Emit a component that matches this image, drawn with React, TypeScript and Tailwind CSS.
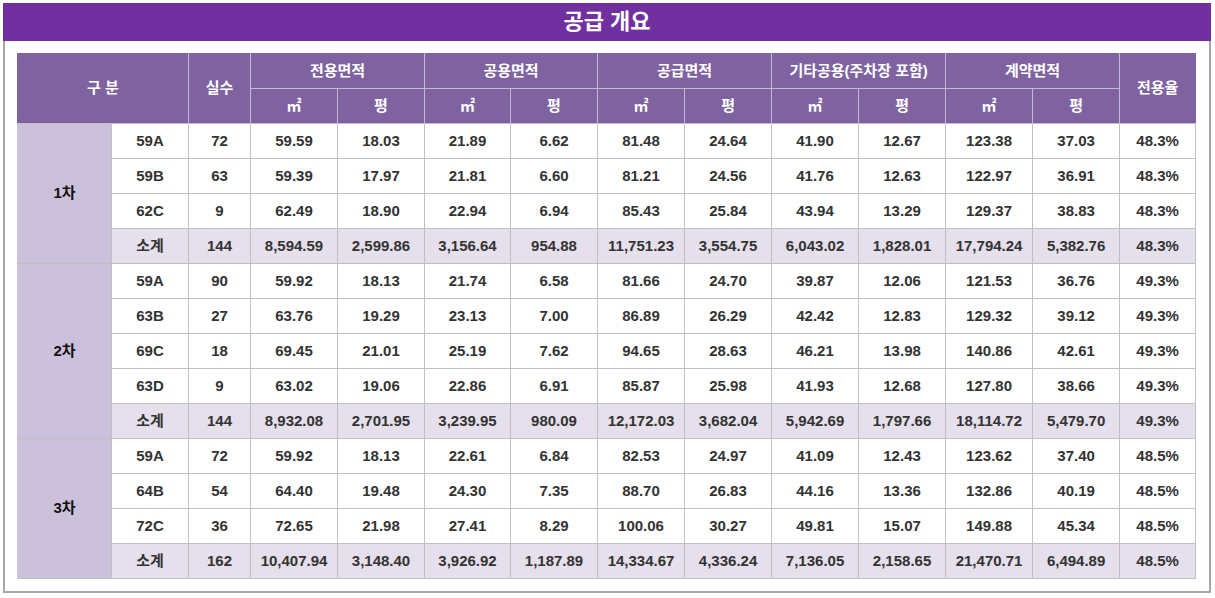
import React from "react";

type Row = string[];
const groups: { name: string; rows: Row[] }[] = [
  {
    name: "1차",
    rows: [
      ["59A", "72", "59.59", "18.03", "21.89", "6.62", "81.48", "24.64", "41.90", "12.67", "123.38", "37.03", "48.3%"],
      ["59B", "63", "59.39", "17.97", "21.81", "6.60", "81.21", "24.56", "41.76", "12.63", "122.97", "36.91", "48.3%"],
      ["62C", "9", "62.49", "18.90", "22.94", "6.94", "85.43", "25.84", "43.94", "13.29", "129.37", "38.83", "48.3%"],
      ["소계", "144", "8,594.59", "2,599.86", "3,156.64", "954.88", "11,751.23", "3,554.75", "6,043.02", "1,828.01", "17,794.24", "5,382.76", "48.3%"],
    ],
  },
  {
    name: "2차",
    rows: [
      ["59A", "90", "59.92", "18.13", "21.74", "6.58", "81.66", "24.70", "39.87", "12.06", "121.53", "36.76", "49.3%"],
      ["63B", "27", "63.76", "19.29", "23.13", "7.00", "86.89", "26.29", "42.42", "12.83", "129.32", "39.12", "49.3%"],
      ["69C", "18", "69.45", "21.01", "25.19", "7.62", "94.65", "28.63", "46.21", "13.98", "140.86", "42.61", "49.3%"],
      ["63D", "9", "63.02", "19.06", "22.86", "6.91", "85.87", "25.98", "41.93", "12.68", "127.80", "38.66", "49.3%"],
      ["소계", "144", "8,932.08", "2,701.95", "3,239.95", "980.09", "12,172.03", "3,682.04", "5,942.69", "1,797.66", "18,114.72", "5,479.70", "49.3%"],
    ],
  },
  {
    name: "3차",
    rows: [
      ["59A", "72", "59.92", "18.13", "22.61", "6.84", "82.53", "24.97", "41.09", "12.43", "123.62", "37.40", "48.5%"],
      ["64B", "54", "64.40", "19.48", "24.30", "7.35", "88.70", "26.83", "44.16", "13.36", "132.86", "40.19", "48.5%"],
      ["72C", "36", "72.65", "21.98", "27.41", "8.29", "100.06", "30.27", "49.81", "15.07", "149.88", "45.34", "48.5%"],
      ["소계", "162", "10,407.94", "3,148.40", "3,926.92", "1,187.89", "14,334.67", "4,336.24", "7,136.05", "2,158.65", "21,470.71", "6,494.89", "48.5%"],
    ],
  },
];

const heads = ["전용면적", "공용면적", "공급면적", "기타공용(주차장 포함)", "계약면적"];
const colW = [94, 77, 62, 87, 87, 86, 87, 87, 87, 87, 87, 87, 87, 76];

const font = { fontFamily: '"Liberation Sans", Arial, "Noto Sans CJK KR", sans-serif' };

const th = "border border-[#c4bccf] bg-[#7f63a1] text-white font-bold text-[15px] h-[35px] p-0 text-center align-middle";
const td = "border border-[#c0c0c0] font-bold text-[15px] text-[#333] h-[35px] p-0 text-center align-middle";

export default function App() {
  return (
    <div className="w-[1215px] h-[598px] bg-white pt-[3px] pl-[3px]" style={font}>
      <div className="w-[1208px]">
        <div className="h-[38px] bg-[#7030a0] flex items-center justify-center text-white font-bold text-[22px] leading-none">
          공급 개요
        </div>
        <div className="border-l-2 border-r-2 border-b-2 border-[#a6a6a6] pl-[12px] pr-[12px] pt-[12px] pb-[12px]">
          <table className="table-fixed border-collapse w-[1178px]">
            <colgroup>
              {colW.map((w, i) => (
                <col key={i} style={{ width: w }} />
              ))}
            </colgroup>
            <thead>
              <tr>
                <th className={th + " border-l-[#7f63a1] border-t-[#7f63a1]"} colSpan={2} rowSpan={2}>
                  구 분
                </th>
                <th className={th + " border-t-[#7f63a1]"} rowSpan={2}>실수</th>
                {heads.map((h) => (
                  <th key={h} className={th + " border-t-[#7f63a1]"} colSpan={2}>
                    {h}
                  </th>
                ))}
                <th className={th + " border-r-[#7f63a1] border-t-[#7f63a1]"} rowSpan={2}>전용율</th>
              </tr>
              <tr>
                {heads.map((h) => (
                  <React.Fragment key={h}>
                    <th className={th}>㎡</th>
                    <th className={th}>평</th>
                  </React.Fragment>
                ))}
              </tr>
            </thead>
            <tbody>
              {groups.map((g) =>
                g.rows.map((r, ri) => {
                  const sub = r[0] === "소계";
                  return (
                    <tr key={g.name + ri} className={sub ? "bg-[#e5e0ec]" : "bg-white"}>
                      {ri === 0 && (
                        <td
                          rowSpan={g.rows.length}
                          className="border border-[#c0c0c0] border-l-[#ccc1da] bg-[#ccc1da] font-bold text-[15px] text-[#111] p-0 text-center align-middle"
                        >
                          {g.name}
                        </td>
                      )}
                      {r.map((c, ci) => (
                        <td key={ci} className={td}>
                          {c}
                        </td>
                      ))}
                    </tr>
                  );
                })
              )}
            </tbody>
          </table>
        </div>
      </div>
    </div>
  );
}
